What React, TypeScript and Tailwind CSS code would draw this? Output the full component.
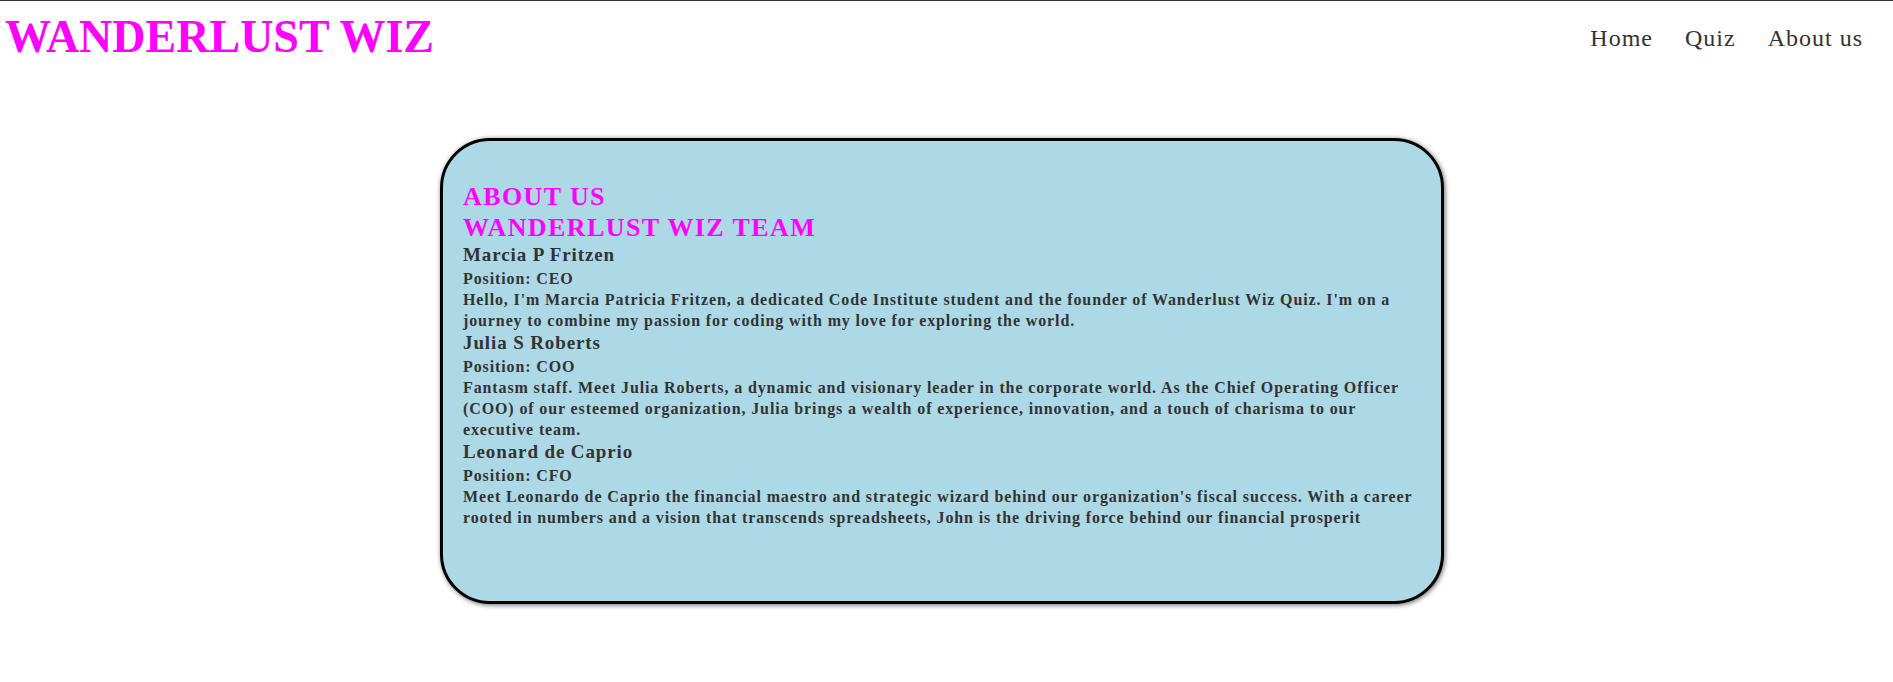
import React from 'react';

const team = [
  {
    name: 'Marcia P Fritzen',
    position: 'CEO',
    bio: "Hello, I'm Marcia Patricia Fritzen, a dedicated Code Institute student and the founder of Wanderlust Wiz Quiz. I'm on a journey to combine my passion for coding with my love for exploring the world.",
  },
  {
    name: 'Julia S Roberts',
    position: 'COO',
    bio: 'Fantasm staff. Meet Julia Roberts, a dynamic and visionary leader in the corporate world. As the Chief Operating Officer (COO) of our esteemed organization, Julia brings a wealth of experience, innovation, and a touch of charisma to our executive team.',
  },
  {
    name: 'Leonard de Caprio',
    position: 'CFO',
    bio: "Meet Leonardo de Caprio the financial maestro and strategic wizard behind our organization's fiscal success. With a career rooted in numbers and a vision that transcends spreadsheets, John is the driving force behind our financial prosperit",
  },
];

export default function App() {
  return (
    <div className="min-h-screen bg-white border-t border-[#333] font-['Liberation_Serif','Times_New_Roman',serif]">
      {/* Header */}
      <header className="flex justify-between items-start pt-[10px] pl-[5px] pr-[30px]">
        <h1 className="text-[46px] leading-[52px] font-bold text-[#ff00ff]">WANDERLUST WIZ</h1>
        <nav className="flex gap-8 mt-[13px] text-[24px] leading-[28px] tracking-[1px] text-[#333]">
          <a href="#">Home</a>
          <a href="#">Quiz</a>
          <a href="#">About us</a>
        </nav>
      </header>

      {/* About card */}
      <main className="pt-[75px] pl-[440px]">
        <section className="w-[1004px] h-[466px] bg-[#add8e6] border-[3px] border-black rounded-[50px] shadow-[1px_1px_5px_rgba(0,0,0,0.6)] pt-[40px] px-[20px] text-[#333] font-bold tracking-[0.88px]">
          <h2 className="text-[26px] leading-[31px] tracking-[1.4px] text-[#ff00ff]">
            ABOUT US
            <br />
            WANDERLUST WIZ TEAM
          </h2>
          {team.map((m) => (
            <div key={m.name}>
              <h3 className="text-[19px] leading-[23px] mb-[2px]">{m.name}</h3>
              <p className="text-[16px] leading-[21px]">Position: {m.position}</p>
              <p className="text-[16px] leading-[21px]">{m.bio}</p>
            </div>
          ))}
        </section>
      </main>
    </div>
  );
}
